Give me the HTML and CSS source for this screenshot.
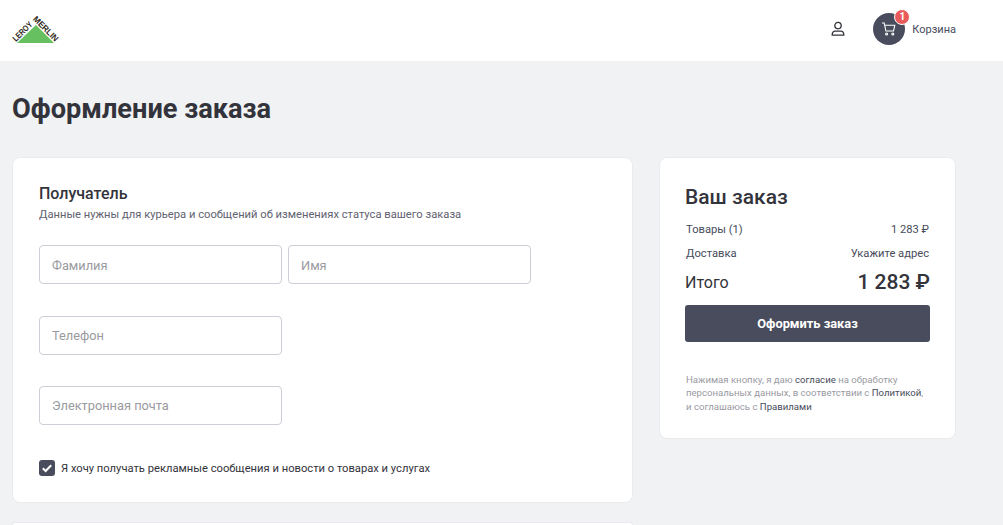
FILE: index.html
```html
<!DOCTYPE html>
<html lang="ru">
<head>
    <meta charset="UTF-8">
    <title>Оформление заказа</title>
    <link rel="stylesheet" href="styles.css">
</head>
<body>
    <header class="header">
        <svg class="logo" width="54" height="34" viewBox="0 0 54 34">
            <polygon points="6,29 25,11 43,29" fill="#66c05f"/>
            <text class="logo-txt" transform="translate(5,28) rotate(-45)" textLength="24" lengthAdjust="spacingAndGlyphs">LEROY</text>
            <text class="logo-txt" transform="translate(21.500,5.500) rotate(45)" textLength="32" lengthAdjust="spacingAndGlyphs">MERLIN</text>
        </svg>
        <div class="header-right">
            <svg class="user-icon" width="16" height="16" viewBox="0 0 16 16" fill="none" stroke="#33333b" stroke-width="1.3">
                <circle cx="8" cy="4.6" r="3.2"/>
                <path d="M2.2 14.2c0-2.6 1-4 3-4h5.600c2 0 3 1.400 3 4z"/>
            </svg>
            <div class="cart">
                <div class="cart-circle">
                    <svg width="16" height="16" viewBox="0 0 16 16" fill="none" stroke="#fff" stroke-width="1.100">
                        <path d="M1 2h2.200l1.700 8h7.600l1.300-5.800H3.700"/>
                        <circle cx="5.600" cy="13" r="1"/>
                        <circle cx="11.800" cy="13" r="1"/>
                    </svg>
                    <span class="badge">1</span>
                </div>
                <span class="cart-txt">Корзина</span>
            </div>
        </div>
    </header>

    <main class="main">
        <h1 class="title">Оформление заказа</h1>
        <div class="columns">
            <div class="left">
                <section class="card recipient">
                    <h2 class="card-title">Получатель</h2>
                    <p class="card-sub">Данные нужны для курьера и сообщений об изменениях статуса вашего заказа</p>
                    <div class="row">
                        <div class="field">Фамилия</div>
                        <div class="field">Имя</div>
                    </div>
                    <div class="row">
                        <div class="field">Телефон</div>
                    </div>
                    <div class="row">
                        <div class="field">Электронная почта</div>
                    </div>
                    <label class="check">
                        <span class="box">
                            <svg width="12" height="12" viewBox="0 0 12 12" fill="none" stroke="#fff" stroke-width="2"><path d="M1.800 6.300l2.800 2.700 5.600-5.800"/></svg>
                        </span>
                        Я хочу получать рекламные сообщения и новости о товарах и услугах
                    </label>
                </section>
                <section class="card next"></section>
            </div>

            <aside class="card order">
                <h2 class="order-title">Ваш заказ</h2>
                <div class="line first"><span>Товары (1)</span><span>1 283 ₽</span></div>
                <div class="line"><span>Доставка</span><span>Укажите адрес</span></div>
                <div class="total"><span>Итого</span><b>1 283 ₽</b></div>
                <button class="submit">Оформить заказ</button>
                <p class="note">Нажимая кнопку, я даю <a>согласие</a> на обработку персональных данных, в соответствии с <a>Политикой</a>,<br>и соглашаюсь с <a>Правилами</a></p>
            </aside>
        </div>
    </main>
</body>
</html>
```
FILE: styles.css
```css
body {
    margin: 0;
    height: 525px;
    overflow: hidden;
    background: #f0f2f4;
    font-family: Roboto, "Liberation Sans", sans-serif;
    color: #33333b;
}

/* header */
.header {
    height: 61px;
    box-sizing: border-box;
    padding: 0 47px 3px 11px;
    background: #fff;
    display: flex;
    justify-content: space-between;
    align-items: center;
}

.logo {
    margin-top: 4px;
}

.logo-txt {
    font-family: "Liberation Sans", sans-serif;
    font-size: 8.500px;
    font-weight: bold;
    fill: #2e2a20;
}

.header-right {
    display: flex;
    align-items: center;
}

.user-icon {
    margin-right: 27px;
}

.cart {
    display: flex;
    align-items: center;
}

.cart-circle {
    position: relative;
    width: 32px;
    height: 32px;
    border-radius: 50%;
    background: #484c5c;
    display: flex;
    justify-content: center;
    align-items: center;
}

.badge {
    position: absolute;
    top: -4px;
    right: -5px;
    width: 14px;
    height: 14px;
    border-radius: 50%;
    background: #ea5a5a;
    color: #fff;
    border: 1px solid #fff;
    font-size: 10px;
    font-weight: 700;
    line-height: 14px;
    text-align: center;
}

.cart-txt {
    font-size: 11px;
    margin-left: 7px;
    color: #484c5c;
}

/* page */
.main {
    padding: 0 12px;
}

.title {
    margin: 0;
    padding: 32px 0 31px;
    font-size: 27.200px;
    line-height: 33px;
    font-weight: 700;
}

.columns {
    display: flex;
    align-items: flex-start;
    gap: 26px;
}

.left {
    width: 621px;
    display: flex;
    flex-direction: column;
    gap: 19px;
}

.card {
    background: #fff;
    border: 1px solid #e9ebee;
    border-radius: 8px;
    box-sizing: border-box;
}

.recipient {
    height: 346px;
    padding: 26px 26px 0;
}

.next {
    height: 3px;
    border-bottom: 0;
    border-radius: 8px 8px 0 0;
}

.card-title {
    margin: 0;
    font-size: 16px;
    line-height: 20px;
    font-weight: 500;
}

.card-sub {
    margin: 4px 0 0;
    font-size: 11.200px;
    line-height: 14px;
    color: #5f6270;
}

.row {
    display: flex;
    gap: 6px;
    margin-bottom: 31px;
}

.field {
    width: 243px;
    height: 39px;
    box-sizing: border-box;
    border: 1px solid #cdced6;
    border-radius: 4px;
    padding: 0 12px;
    font-size: 12.800px;
    line-height: 37px;
    color: #9a9aa0;
}

.card-sub + .row {
    margin-top: 23px;
    margin-bottom: 32px;
}

.card-sub + .row .field {
    line-height: 39px;
}

.check {
    display: flex;
    align-items: center;
    gap: 6px;
    margin-top: 35px;
    font-size: 11.200px;
    color: #33333b;
}

.box {
    width: 16px;
    height: 16px;
    border-radius: 3px;
    background: #484c5c;
    display: flex;
    justify-content: center;
    align-items: center;
}

/* order */
.order {
    width: 297px;
    height: 282px;
    padding: 26px 25px 0;
}

.order-title {
    margin: 0;
    font-size: 21px;
    line-height: 26px;
    font-weight: 500;
}

.line {
    display: flex;
    justify-content: space-between;
    padding: 0 1px;
    font-size: 11.200px;
    line-height: 14px;
    margin-top: 10px;
    color: #484c5c;
}

.line.first {
    margin-top: 13px;
}

.total {
    display: flex;
    justify-content: space-between;
    align-items: center;
    margin-top: 7px;
    height: 28px;
    font-size: 16px;
}

.total b {
    font-size: 21px;
    font-weight: 500;
}

.submit {
    display: block;
    width: 100%;
    height: 37px;
    margin-top: 9px;
    border: 0;
    border-radius: 3px;
    background: #484c5c;
    color: #fff;
    font-family: inherit;
    font-size: 12.800px;
    font-weight: 700;
}

.note {
    margin: 31px 0 0 1px;
    font-size: 9.600px;
    line-height: 13.300px;
    color: #9a9aa3;
}

.note a {
    color: #484c5c;
}
```
